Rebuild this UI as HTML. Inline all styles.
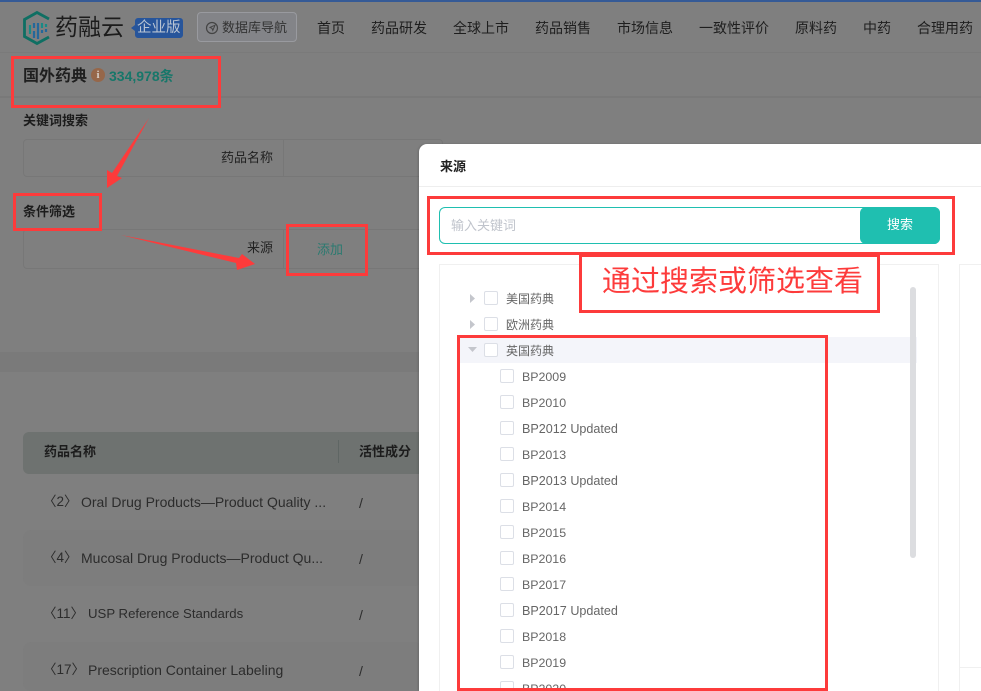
<!DOCTYPE html>
<html lang="zh"><head><meta charset="utf-8"><title>国外药典</title>
<style>
*{box-sizing:border-box;margin:0;padding:0}
html,body{width:981px;height:691px;overflow:hidden;background:#7f7f7f}
body{position:relative;font-family:"Liberation Sans","Noto Sans CJK SC",sans-serif;font-size:13px;color:#222}
.a{position:absolute;white-space:nowrap}
.nav{top:18px;font-size:14px;line-height:20px;color:#1e1e1e}
.red{position:absolute;border:3px solid #fd3b3b;z-index:5}
.cb{position:absolute;width:14px;height:14px;border:1px solid #dcdfe6;border-radius:2px;background:#fff}
.t{position:absolute;font-size:12px;line-height:18px;color:#666;white-space:nowrap}
.t.l{font-size:12.4px}
.t.u{font-size:12.6px}
.row{position:absolute;left:23px;width:400px;height:56px;border-radius:8px}
.cell{position:absolute;font-size:14px;line-height:20px;color:#2c2c2c;white-space:nowrap}
</style></head><body>
<div class="a" style="left:0;top:0;width:981px;height:2px;background:#355a96"></div>
<div class="a" style="left:0;top:52px;width:981px;height:1px;background:#7a7a7a"></div>
<div class="a" style="left:0;top:96px;width:981px;height:2px;background:#797979"></div>

<svg class="a" style="left:22px;top:10px" width="30" height="36" viewBox="0 0 30 36">
<path d="M27 9 15 2.500 2.500 9.500v17L15 33.500l12-6.500" fill="none" stroke="#0f6f63" stroke-width="2.800"/>
<g stroke-width="2.200">
<path d="M8 15v9M20 13v5M24 14v3" stroke="#1a8a86" fill="none"/>
<path d="M12 13v5M16 13v16M20 20v3M24 19v3M12 21v7" stroke="#24689a" fill="none"/>
</g></svg>
<div class="a" style="left:55px;top:10px;font-size:23px;line-height:34px;color:#1c1c1c">药融云</div>
<svg class="a" style="left:130px;top:17px" width="54" height="22"><path d="M8 1h42a3 3 0 0 1 3 3v14a3 3 0 0 1-3 3H8a3 3 0 0 1-3-3v-4l-4-3 4-3V4a3 3 0 0 1 3-3z" fill="#27559b"/></svg>
<div class="a" style="left:137px;top:18px;font-size:14.500px;line-height:20px;color:#b9c4d3">企业版</div>
<div class="a" style="left:197px;top:12px;width:100px;height:30px;border:1px solid #999a9f;border-radius:4px;background:#838488"></div>
<svg class="a" style="left:205px;top:21px" width="14" height="14" viewBox="0 0 14 14"><circle cx="7" cy="7" r="5.500" fill="none" stroke="#444" stroke-width="1.200"/><path d="M10 4.200 5 6.400l2 1 .8 2z" fill="none" stroke="#444"/></svg>
<div class="a" style="left:222px;top:18px;font-size:13px;line-height:20px;color:#333">数据库导航</div>

<div class="a nav" style="left:317px">首页</div>
<div class="a nav" style="left:371px">药品研发</div>
<div class="a nav" style="left:453px">全球上市</div>
<div class="a nav" style="left:535px">药品销售</div>
<div class="a nav" style="left:617px">市场信息</div>
<div class="a nav" style="left:699px">一致性评价</div>
<div class="a nav" style="left:795px">原料药</div>
<div class="a nav" style="left:863px">中药</div>
<div class="a nav" style="left:917px">合理用药</div>

<div class="a" style="left:23px;top:65px;font-size:16px;line-height:24px;font-weight:700;color:#1f1f1f">国外药典</div>
<div class="a" style="left:91px;top:68px;width:14px;height:14px;border-radius:50%;background:#96674a;color:#d8cfc8;font:700 11px/14px 'Liberation Serif',serif;text-align:center">i</div>
<div class="a" style="left:109px;top:66px;font-size:14px;line-height:20px;font-weight:700;color:#17776a">334,978<span style="font-size:14px">条</span></div>

<div class="a" style="left:23px;top:111px;font-size:13px;line-height:20px;font-weight:700;color:#1c1c1c">关键词搜索</div>
<div class="a" style="left:23px;top:139px;width:420px;height:38px;border:1px solid #777;border-radius:4px"></div>
<div class="a" style="left:283px;top:139px;width:1px;height:38px;background:#777"></div>
<div class="a" style="left:221px;top:148px;font-size:13px;line-height:20px;color:#222">药品名称</div>

<div class="a" style="left:23px;top:202px;font-size:13px;line-height:20px;font-weight:700;color:#1c1c1c">条件筛选</div>
<div class="a" style="left:23px;top:229px;width:420px;height:40px;border:1px solid #777;border-radius:4px"></div>
<div class="a" style="left:283px;top:229px;width:1px;height:40px;background:#777"></div>
<div class="a" style="left:247px;top:238px;font-size:13px;line-height:20px;color:#222">来源</div>
<div class="a" style="left:317px;top:240px;font-size:13px;line-height:20px;color:#2b7a70">添加</div>

<div class="a" style="left:0;top:352px;width:420px;height:20px;background:#7a7a7a"></div>
<div class="a" style="left:23px;top:432px;width:400px;height:42px;border-radius:6px 0 0 6px;background:#6e7270"></div>
<div class="a" style="left:338px;top:440px;width:1px;height:23px;background:#5f6664"></div>
<div class="a" style="left:44px;top:442px;font-size:13px;line-height:20px;font-weight:700;color:#1c1c1c">药品名称</div>
<div class="a" style="left:359px;top:442px;font-size:13px;line-height:20px;font-weight:700;color:#1c1c1c">活性成分</div>
<div class="row" style="top:530px;background:#7d7d7d"></div>
<div class="row" style="top:642px;height:49px;background:#7d7d7d"></div>
<div class="cell" style="left:43px;top:492px;font-size:13.500px">〈2〉</div><div class="cell" style="left:81px;top:492px">Oral Drug Products—Product Quality ...</div>
<div class="cell" style="left:43px;top:548px;font-size:13.500px">〈4〉</div><div class="cell" style="left:81px;top:548px">Mucosal Drug Products—Product Qu...</div>
<div class="cell" style="left:43px;top:604px;font-size:13.500px">〈11〉</div><div class="cell" style="left:88px;top:604px;font-size:13.200px">USP Reference Standards</div>
<div class="cell" style="left:43px;top:660px;font-size:13.500px">〈17〉</div><div class="cell" style="left:88px;top:660px">Prescription Container Labeling</div>
<div class="cell" style="left:359px;top:493px">/</div>
<div class="cell" style="left:359px;top:549px">/</div>
<div class="cell" style="left:359px;top:605px">/</div>
<div class="cell" style="left:359px;top:661px">/</div>

<!-- modal -->
<div class="a" style="left:419px;top:144px;width:562px;height:547px;background:#fff;border-radius:8px 0 0 0;box-shadow:-1px 0 2px rgba(0,0,0,.15)"></div>
<div class="a" style="left:440px;top:157px;font-size:13px;line-height:20px;font-weight:700;color:#222">来源</div>
<div class="a" style="left:419px;top:186px;width:562px;height:1px;background:#eee"></div>
<div class="a" style="left:439px;top:207px;width:501px;height:37px;border:1px solid #1fbfb0;border-radius:6px"></div>
<div class="a" style="left:860px;top:207px;width:80px;height:37px;background:#1fbfb0;border-radius:6px;color:#fff;font-size:13px;line-height:36px;text-align:center">搜索</div>
<div class="a" style="left:451px;top:216px;font-size:13px;line-height:20px;color:#c0c4cc">输入关键词</div>
<div class="a" style="left:439px;top:264px;width:500px;height:427px;border:1px solid #f0f0f0;border-bottom:0"></div>
<div class="a" style="left:959px;top:264px;width:22px;height:427px;border:1px solid #f0f0f0;border-right:0;border-bottom:0"></div>
<div class="a" style="left:960px;top:667px;width:21px;height:1px;background:#f0f0f0"></div>
<div class="a" style="left:459px;top:337px;width:458px;height:26px;background:#f4f5fa"></div>
<div class="a" style="left:910px;top:287px;width:6px;height:271px;background:#dcdde0;border-radius:3px"></div>

<svg class="a" style="left:466px;top:292px" width="14" height="64"><path d="M4 2l5 4.500-5 4.500zM4 28l5 4.500-5 4.500z" fill="#c4c6cc"/><path d="M2 55h9l-4.500 5z" fill="#c4c6cc"/></svg>
<div class="cb" style="left:484px;top:291px"></div><div class="t" style="left:506px;top:290px">美国药典</div>
<div class="cb" style="left:484px;top:317px"></div><div class="t" style="left:506px;top:316px">欧洲药典</div>
<div class="cb" style="left:484px;top:343px"></div><div class="t" style="left:506px;top:342px">英国药典</div>
<div class="cb" style="left:500px;top:369px"></div><div class="t l" style="left:522px;top:368px">BP2009</div>
<div class="cb" style="left:500px;top:395px"></div><div class="t l" style="left:522px;top:394px">BP2010</div>
<div class="cb" style="left:500px;top:421px"></div><div class="t u" style="left:522px;top:420px">BP2012 Updated</div>
<div class="cb" style="left:500px;top:447px"></div><div class="t l" style="left:522px;top:446px">BP2013</div>
<div class="cb" style="left:500px;top:473px"></div><div class="t u" style="left:522px;top:472px">BP2013 Updated</div>
<div class="cb" style="left:500px;top:499px"></div><div class="t l" style="left:522px;top:498px">BP2014</div>
<div class="cb" style="left:500px;top:525px"></div><div class="t l" style="left:522px;top:524px">BP2015</div>
<div class="cb" style="left:500px;top:551px"></div><div class="t l" style="left:522px;top:550px">BP2016</div>
<div class="cb" style="left:500px;top:577px"></div><div class="t l" style="left:522px;top:576px">BP2017</div>
<div class="cb" style="left:500px;top:603px"></div><div class="t u" style="left:522px;top:602px">BP2017 Updated</div>
<div class="cb" style="left:500px;top:629px"></div><div class="t l" style="left:522px;top:628px">BP2018</div>
<div class="cb" style="left:500px;top:655px"></div><div class="t l" style="left:522px;top:654px">BP2019</div>
<div class="cb" style="left:500px;top:681px"></div><div class="t l" style="left:522px;top:680px">BP2020</div>

<!-- annotations -->
<div class="red" style="left:11px;top:56px;width:210px;height:52px"></div>
<div class="red" style="left:13px;top:193px;width:89px;height:38px"></div>
<div class="red" style="left:286px;top:224px;width:82px;height:52px"></div>
<div class="red" style="left:427px;top:196px;width:528px;height:59px"></div>
<div class="red" style="left:579px;top:254px;width:301px;height:59px;background:#fff"></div>
<div class="a" style="left:602px;top:262px;font-size:29px;line-height:40px;color:#fd3b3b;z-index:6">通过搜索或筛选查看</div>
<div class="red" style="left:457px;top:335px;width:371px;height:356px"></div>
<svg class="a" style="left:0;top:0;z-index:6" width="300" height="290"><polygon points="149,118 117,176 122,178 107,188 107,170 112,173" fill="#fd3b3b"/><polygon points="121,235 239,258 242,254 255,264 237,270 236,263" fill="#fd3b3b"/></svg>
</body></html>
